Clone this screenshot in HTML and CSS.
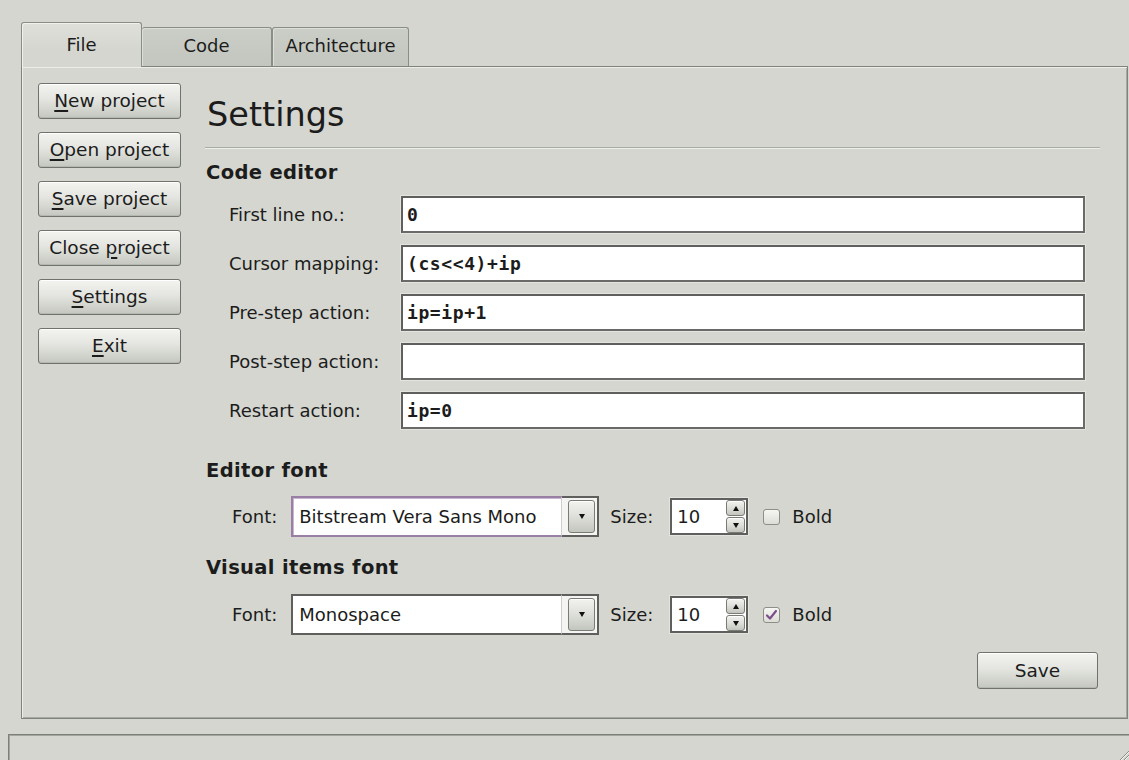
FILE: index.html
```html
<!DOCTYPE html>
<html lang="en">
<head>
<meta charset="utf-8">
<title>Settings</title>
<link rel="stylesheet" href="styles.css">
</head>
<body>
<div class="app">
  <div class="tabwidget">
    <div class="tabbar">
      <div class="tab tab-file active">File</div>
      <div class="tab tab-code">Code</div>
      <div class="tab tab-arch">Architecture</div>
    </div>
    <div class="pane">
      <div class="sidebar">
        <div class="btn"><span><u>N</u>ew project</span></div>
        <div class="btn"><span><u>O</u>pen project</span></div>
        <div class="btn"><span><u>S</u>ave project</span></div>
        <div class="btn"><span>Close <u>p</u>roject</span></div>
        <div class="btn"><span><u>S</u>ettings</span></div>
        <div class="btn"><span><u>E</u>xit</span></div>
      </div>
      <div class="main">
        <h1 class="title">Settings</h1>
        <div class="rule"></div>

        <h2 class="group-title first">Code editor</h2>
        <div class="fields">
          <div class="label">First line no.:</div>
          <div class="field">0</div>
          <div class="label">Cursor mapping:</div>
          <div class="field">(cs&lt;&lt;4)+ip</div>
          <div class="label">Pre-step action:</div>
          <div class="field">ip=ip+1</div>
          <div class="label">Post-step action:</div>
          <div class="field"></div>
          <div class="label">Restart action:</div>
          <div class="field">ip=0</div>
        </div>

        <h2 class="group-title editor">Editor font</h2>
        <div class="font-row row-editor">
          <span class="row-label">Font:</span>
          <div class="combo focus">
            <div class="combo-text">Bitstream Vera Sans Mono</div>
            <div class="combo-side"><div class="combo-btn"><span class="arrow-down"></span></div></div>
          </div>
          <span class="row-label size-label">Size:</span>
          <div class="spin">
            <div class="spin-text">10</div>
            <div class="spin-btns">
              <div class="spin-btn"><span class="tri-up"></span></div>
              <div class="spin-btn"><span class="tri-down"></span></div>
            </div>
          </div>
          <div class="check"></div>
          <span class="check-label">Bold</span>
        </div>

        <h2 class="group-title visual">Visual items font</h2>
        <div class="font-row row-visual">
          <span class="row-label">Font:</span>
          <div class="combo">
            <div class="combo-text">Monospace</div>
            <div class="combo-side"><div class="combo-btn"><span class="arrow-down"></span></div></div>
          </div>
          <span class="row-label size-label">Size:</span>
          <div class="spin">
            <div class="spin-text">10</div>
            <div class="spin-btns">
              <div class="spin-btn"><span class="tri-up"></span></div>
              <div class="spin-btn"><span class="tri-down"></span></div>
            </div>
          </div>
          <div class="check checked">
            <svg width="15" height="14" viewBox="0 0 15 14"><polyline points="3,7.5 6,10.5 12,3" fill="none" stroke="#7d4f8c" stroke-width="2.2" stroke-linecap="round" stroke-linejoin="round"/></svg>
          </div>
          <span class="check-label">Bold</span>
        </div>

        <div class="actions">
          <div class="btn save">Save</div>
        </div>
      </div>
    </div>
  </div>
  <div class="statusbar">
    <svg class="grip" width="11" height="11" viewBox="0 0 11 11">
      <line x1="11" y1="2" x2="2" y2="11" stroke="#8a8d86" stroke-width="1"/>
      <line x1="11" y1="6" x2="6" y2="11" stroke="#8a8d86" stroke-width="1"/>
      <line x1="11" y1="3" x2="3" y2="11" stroke="#f4f4f1" stroke-width="1"/>
      <line x1="11" y1="7" x2="7" y2="11" stroke="#f4f4f1" stroke-width="1"/>
    </svg>
  </div>
</div>
</body>
</html>
```

FILE: styles.css
```css
* {
  box-sizing: border-box;
}

html,
body {
  margin: 0;
  padding: 0;
}

body {
  width: 1129px;
  height: 760px;
  overflow: hidden;
  background: #d4d6cf;
  color: #1c1c1c;
  font-family: "DejaVu Sans", "Bitstream Vera Sans", sans-serif;
  font-size: 18px;
}

.app {
  display: flex;
  flex-direction: column;
  height: 760px;
  padding-top: 22px;
}

/* ---------- tab widget ---------- */

.tabwidget {
  display: flex;
  flex-direction: column;
  width: 1107px;
  height: 697px;
  margin-left: 21px;
}

.tabbar {
  display: flex;
  align-items: flex-end;
  height: 44px;
  position: relative;
  z-index: 1;
}

.tab {
  display: flex;
  align-items: center;
  justify-content: center;
  height: 39px;
  padding-bottom: 3px;
  border: 1px solid #8a8d86;
  border-bottom: none;
  border-radius: 3px 3px 0 0;
  background: linear-gradient(#cbcec6, #c3c6be);
  box-shadow: inset 1px 1px 0 #dcded8;
}

.tab-file {
  width: 121px;
  height: 45px;
  margin-bottom: -1px;
  padding-bottom: 2px;
  background: linear-gradient(#dfe0da, #d4d6cf 60%);
  box-shadow: inset 1px 1px 0 #f1f2ee;
}

.tab-code {
  width: 130px;
  border-left: none;
}

.tab-arch {
  width: 137px;
}

.pane {
  display: flex;
  flex: 1;
  padding: 16px 27px 0 16px;
  border: 1px solid #80837c;
  box-shadow: inset 1px 1px 0 #eceee8, inset -1px -1px 0 #a7aaa2;
}

/* ---------- push buttons ---------- */

.sidebar {
  display: flex;
  flex-direction: column;
  gap: 13px;
  width: 143px;
  flex: none;
}

.btn {
  display: flex;
  align-items: center;
  justify-content: center;
  height: 36px;
  border: 1px solid #70736c;
  border-radius: 3px;
  background: linear-gradient(#f3f3f0 0%, #e4e5e0 45%, #c4c7bf 100%);
  box-shadow: inset 0 1px 0 #ffffff, inset 0 -1px 0 #b5b8b0;
  font-size: 18.5px;
  white-space: nowrap;
  padding-bottom: 1px;
}

.btn u {
  text-decoration-thickness: 1.5px;
  text-underline-offset: 3px;
}

/* ---------- settings page ---------- */

.main {
  flex: 1;
  margin-left: 24px;
  display: flex;
  flex-direction: column;
}

.title {
  margin: 12px 0 0 2px;
  font-size: 33.5px;
  font-weight: normal;
  line-height: 40px;
}

.rule {
  height: 2px;
  margin-top: 12px;
  border-top: 1px solid #a9aca4;
  border-bottom: 1px solid #eceee9;
}

.group-title {
  margin: 0 0 0 1px;
  font-size: 19.5px;
  font-weight: bold;
  line-height: 24px;
  letter-spacing: 0.35px;
}

.group-title.first {
  margin-top: 12px;
}

.group-title.editor {
  margin-top: 30px;
}

.group-title.visual {
  margin-top: 19px;
}

.fields {
  display: grid;
  grid-template-columns: 172px 1fr;
  grid-auto-rows: 37px;
  row-gap: 12px;
  margin: 11px 15px 0 0;
  padding-left: 24px;
}

.label {
  display: flex;
  align-items: center;
  white-space: nowrap;
}

.field {
  display: flex;
  align-items: center;
  padding: 0 0 1px 4px;
  border: 2px solid #5f605d;
  border-right-color: #6a6b68;
  border-bottom-color: #6a6b68;
  background: #ffffff;
  box-shadow: 0 0 0 1px #e3e4df;
  font-family: "DejaVu Sans Mono", "Bitstream Vera Sans Mono", monospace;
  font-weight: bold;
  font-size: 18px;
  letter-spacing: 0.6px;
}

/* ---------- font rows ---------- */

.font-row {
  display: flex;
  align-items: center;
  height: 41px;
  padding-left: 27px;
}

.row-editor {
  margin-top: 13px;
}

.row-visual {
  margin-top: 14px;
}

.row-label {
  white-space: nowrap;
}

.combo {
  display: flex;
  width: 308px;
  height: 41px;
  margin-left: 14px;
}

.combo-text {
  display: flex;
  align-items: center;
  width: 271px;
  padding: 0 0 1px 6px;
  border: 2px solid #5f605d;
  border-right: 1px solid #cfd0cb;
  background: #ffffff;
  white-space: nowrap;
  overflow: hidden;
}

.combo.focus .combo-text {
  border-color: #9a7fa5;
  border-right-color: #cfd0cb;
  box-shadow: inset 1px 1px 0 #c9b5d1;
}

.combo-side {
  display: flex;
  flex: 1;
  padding: 2px 2px 2px 6px;
  border: 2px solid #5f605d;
  border-left: none;
  background: #f4f4f2;
}

.combo-btn,
.spin-btn {
  display: flex;
  align-items: center;
  justify-content: center;
  border: 1px solid #797c75;
  border-radius: 3px;
  background: linear-gradient(#f2f2ef 0%, #e0e1dc 45%, #c3c6be 100%);
  box-shadow: inset 0 1px 0 #ffffff;
}

.combo-btn {
  flex: 1;
}

.arrow-down {
  width: 0;
  height: 0;
  border-left: 3.5px solid transparent;
  border-right: 3.5px solid transparent;
  border-top: 5px solid #111111;
}

.size-label {
  margin-left: 11px;
}

.spin {
  display: flex;
  width: 78px;
  height: 37px;
  margin-left: 17px;
  padding: 0 1px 0 0;
  border: 2px solid #5f605d;
  background: #ffffff;
  box-shadow: 0 0 0 1px #e3e4df;
}

.spin-text {
  display: flex;
  align-items: center;
  flex: 1;
  padding: 0 0 1px 5px;
}

.spin-btns {
  display: flex;
  flex-direction: column;
  gap: 1px;
  width: 19px;
}

.spin-btn {
  flex: 1;
  border-radius: 3px;
}

.tri-up,
.tri-down {
  width: 0;
  height: 0;
  border-left: 3.5px solid transparent;
  border-right: 3.5px solid transparent;
}

.tri-up {
  border-bottom: 5px solid #111111;
}

.tri-down {
  border-top: 5px solid #111111;
}

.check {
  display: flex;
  align-items: center;
  justify-content: center;
  width: 17px;
  height: 16px;
  margin-left: 15px;
  border: 1px solid #8c8f88;
  border-radius: 3px;
  background: linear-gradient(#f6f6f3, #dcddd7);
}

.check-label {
  margin-left: 12px;
}

/* ---------- bottom ---------- */

.actions {
  display: flex;
  justify-content: flex-end;
  margin: 17px 2px 0 0;
}

.btn.save {
  width: 121px;
  height: 37px;
  font-size: 18.5px;
}

.statusbar {
  display: flex;
  align-items: flex-end;
  justify-content: flex-end;
  height: 26px;
  margin: 15px 0 0 8px;
  border-top: 1px solid #7d8078;
  border-left: 1px solid #7d8078;
  box-shadow: inset 1px 1px 0 #a3a69e;
}

.grip {
  display: block;
}
```
